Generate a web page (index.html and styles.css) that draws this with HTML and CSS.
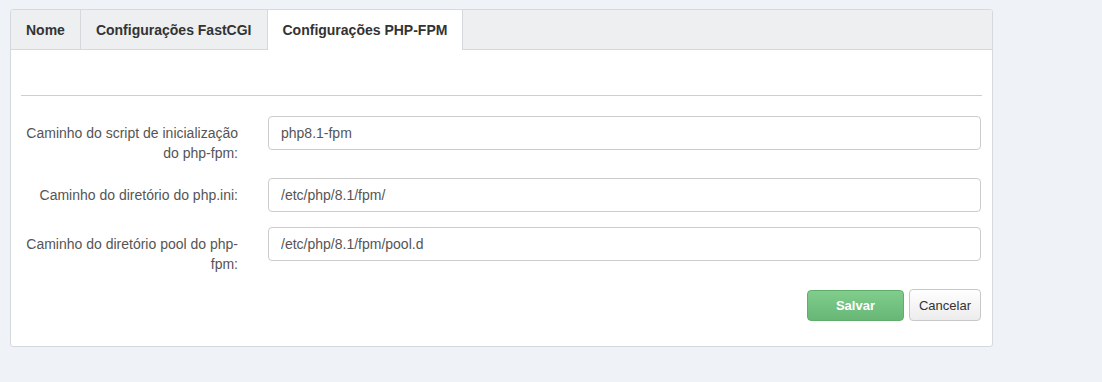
FILE: index.html
```html
<!DOCTYPE html>
<html lang="pt-BR">
<head>
  <meta charset="UTF-8">
  <title>Configurações PHP-FPM</title>
  <link rel="stylesheet" href="styles.css">
</head>
<body>

  <div class="panel">
    <!-- Tabs -->
    <ul class="tabs">
      <li class="tab">Nome</li>
      <li class="tab">Configurações FastCGI</li>
      <li class="tab active">Configurações PHP-FPM</li>
    </ul>

    <!-- PHP-FPM form -->
    <div class="tab-content">
      <hr class="divider">

      <div class="form-row">
        <label class="form-label">Caminho do script de inicialização do php-fpm:</label>
        <input class="form-input" type="text" value="php8.1-fpm">
      </div>

      <div class="form-row">
        <label class="form-label">Caminho do diretório do php.ini:</label>
        <input class="form-input" type="text" value="/etc/php/8.1/fpm/">
      </div>

      <div class="form-row">
        <label class="form-label">Caminho do diretório pool do php-fpm:</label>
        <input class="form-input" type="text" value="/etc/php/8.1/fpm/pool.d">
      </div>

      <div class="actions">
        <button class="btn btn-save">Salvar</button>
        <button class="btn btn-cancel">Cancelar</button>
      </div>
    </div>
  </div>

</body>
</html>
```

FILE: styles.css
```css
/* General Styles */
body {
  font-family: 'Liberation Sans', Arial, sans-serif;
  font-size: 14px;
  background-color: #eff3f7;
  color: #333;
  margin: 0;
  padding: 9px 10px;
}

.panel {
  width: 981px;
  background-color: #fff;
  border: 1px solid #d5d8dc;
  border-radius: 3px;
}

/* Tabs */
.tabs {
  display: flex;
  list-style: none;
  margin: 0;
  padding: 0;
  height: 39px;
  background-color: #eeeff1;
  border-bottom: 1px solid #d5d8dc;
  border-radius: 3px 3px 0 0;
}

.tab {
  display: flex;
  align-items: center;
  padding: 0 15px;
  font-weight: bold;
  color: #333;
  border-right: 1px solid #d5d8dc;
}

.tab.active {
  background-color: #fff;
  height: 40px;
}

/* Content */
.tab-content {
  padding: 0 10px 25px;
}

.divider {
  border: none;
  border-top: 1px solid #cfcfcf;
  margin: 45px 0 20px;
}

.form-row {
  display: flex;
  align-items: flex-start;
  gap: 30px;
  margin-bottom: 15px;
}

.form-label {
  width: 217px;
  flex-shrink: 0;
  padding-top: 7px;
  line-height: 20px;
  text-align: right;
  color: #555;
}

.form-input {
  flex: 1;
  height: 34px;
  box-sizing: border-box;
  margin-right: 1px;
  padding: 6px 12px;
  border: 1px solid #ccc;
  border-radius: 4px;
  font-family: inherit;
  font-size: 14px;
  color: #555;
  outline: none;
}

.actions {
  display: flex;
  justify-content: flex-end;
  align-items: flex-start;
  gap: 5px;
  margin-right: 1px;
}

.btn {
  font-family: inherit;
  font-size: 13px;
  border-radius: 4px;
  cursor: pointer;
}

.btn-save {
  width: 97px;
  height: 31px;
  margin-top: 1px;
  font-weight: bold;
  color: #fff;
  background: linear-gradient(#80cd8c, #68b776);
  border: 1px solid #5fae6c;
}

.btn-cancel {
  height: 32px;
  padding: 0 9px;
  color: #333;
  background: linear-gradient(#fff, #ececec);
  border: 1px solid #c8c8c8;
}
```
